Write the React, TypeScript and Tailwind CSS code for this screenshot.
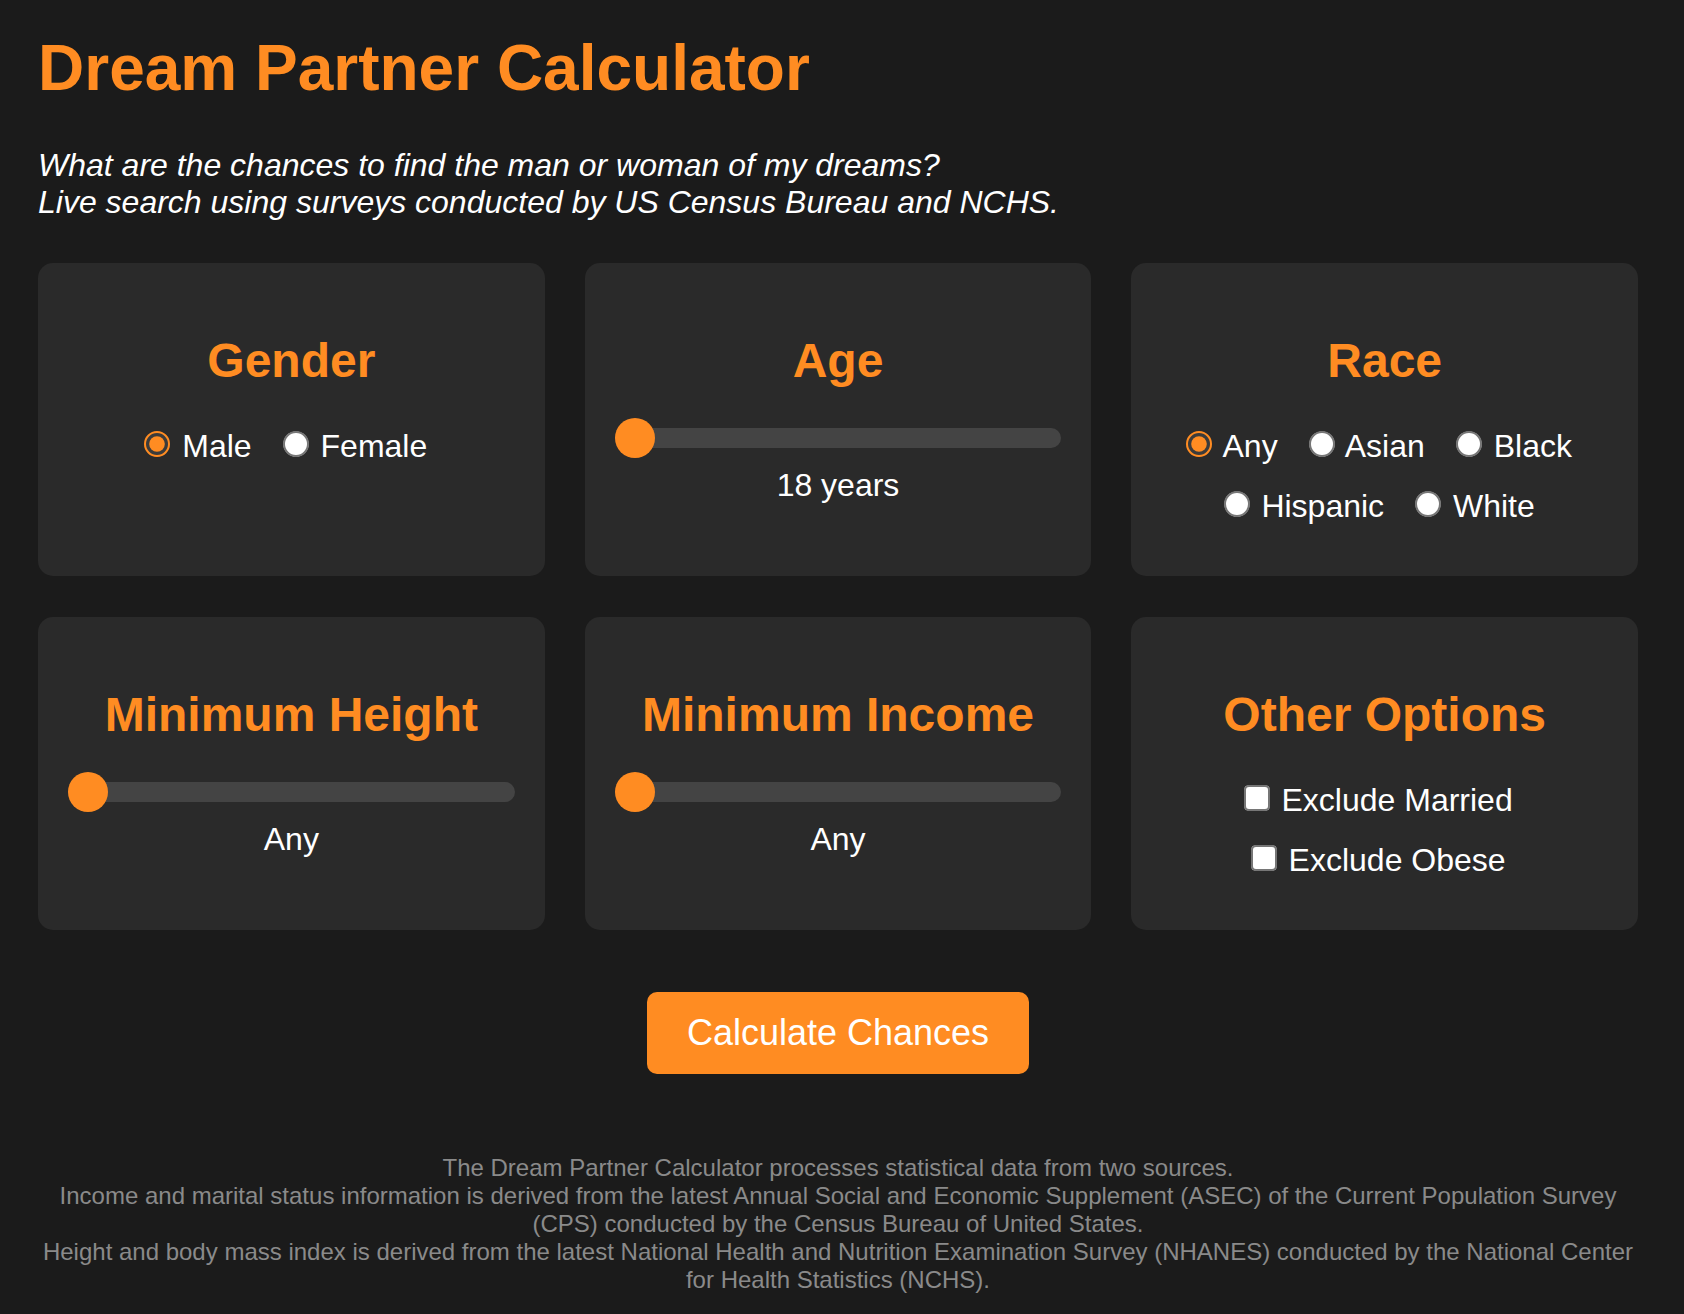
import { useState } from "react";

const ORANGE = "#ff8c22";

function Card({ title, children }: { title: string; children: React.ReactNode }) {
  return (
    <div className="rounded-[15px] bg-[#2a2a2a] px-[30px] pt-[70px] pb-[51px] text-center">
      <h2 className="mb-[40px] text-[48px] font-bold text-[#ff8c22]">{title}</h2>
      {children}
    </div>
  );
}

function RadioGroup({
  name,
  options,
  value,
  onChange,
}: {
  name: string;
  options: string[];
  value: string;
  onChange: (v: string) => void;
}) {
  return (
    <div className="flex flex-wrap justify-center gap-x-[26px] gap-y-[22.5px] pr-[16px] text-[32px] text-white">
      {options.map((opt) => (
        <label key={opt} className="block cursor-pointer">
          <input
            type="radio"
            name={name}
            checked={value === opt}
            onChange={() => onChange(opt)}
            className="ml-[2.5px] mr-[1.5px] accent-[#ff8c22] [zoom:2]"
          />{" "}
          {opt}
        </label>
      ))}
    </div>
  );
}

function Slider({ value, onChange, min, max }: { value: number; onChange: (v: number) => void; min: number; max: number }) {
  return (
    <input
      type="range"
      min={min}
      max={max}
      value={value}
      onChange={(e) => onChange(Number(e.target.value))}
      className="block h-5 w-full cursor-pointer appearance-none rounded-full bg-[#444] outline-none [&::-webkit-slider-thumb]:h-10 [&::-webkit-slider-thumb]:w-10 [&::-webkit-slider-thumb]:appearance-none [&::-webkit-slider-thumb]:rounded-full [&::-webkit-slider-thumb]:bg-[#ff8c22]"
    />
  );
}

function Check({ label, checked, onChange }: { label: string; checked: boolean; onChange: (v: boolean) => void }) {
  return (
    <label className="block cursor-pointer">
      <input
        type="checkbox"
        checked={checked}
        onChange={(e) => onChange(e.target.checked)}
        className="ml-[2px] mr-[1.5px] accent-[#ff8c22] [zoom:2]"
      />{" "}
      {label}
    </label>
  );
}

export default function App() {
  const [gender, setGender] = useState("Male");
  const [race, setRace] = useState("Any");
  const [age, setAge] = useState(18);
  const [height, setHeight] = useState(0);
  const [income, setIncome] = useState(0);
  const [married, setMarried] = useState(false);
  const [obese, setObese] = useState(false);

  return (
    <div className="min-h-screen bg-[#1b1b1b] pl-[38px] pr-[46px] pt-[31px] pb-[24px] font-['Liberation_Sans',Arial,sans-serif] leading-[normal]">
      <h1 className="text-[64px] font-bold" style={{ color: ORANGE }}>
        Dream Partner Calculator
      </h1>
      <p className="mt-[42px] text-[32px] italic text-white">
        What are the chances to find the man or woman of my dreams?
        <br />
        Live search using surveys conducted by US Census Bureau and NCHS.
      </p>

      <div className="mt-[42px] grid grid-cols-3 gap-x-[40px] gap-y-[41px]">
        <Card title="Gender">
          <RadioGroup name="gender" options={["Male", "Female"]} value={gender} onChange={setGender} />
        </Card>

        <Card title="Age">
          <Slider value={age} onChange={setAge} min={18} max={80} />
          <div className="mt-[19px] text-[32px] text-white">{age} years</div>
        </Card>

        <Card title="Race">
          <RadioGroup
            name="race"
            options={["Any", "Asian", "Black", "Hispanic", "White"]}
            value={race}
            onChange={setRace}
          />
        </Card>

        <Card title="Minimum Height">
          <Slider value={height} onChange={setHeight} min={0} max={30} />
          <div className="mt-[19px] text-[32px] text-white">{height === 0 ? "Any" : `${height}`}</div>
        </Card>

        <Card title="Minimum Income">
          <Slider value={income} onChange={setIncome} min={0} max={30} />
          <div className="mt-[19px] text-[32px] text-white">{income === 0 ? "Any" : `${income}`}</div>
        </Card>

        <Card title="Other Options">
          <div className="mt-[2px] flex flex-col items-center gap-y-[23.5px] pr-[17px] text-[32px] text-white">
            <Check label="Exclude Married" checked={married} onChange={setMarried} />
            <Check label="Exclude Obese" checked={obese} onChange={setObese} />
          </div>
        </Card>
      </div>

      <div className="mt-[62px] flex justify-center">
        <button className="rounded-[10px] bg-[#ff8c22] px-[40px] py-[20px] text-[36px] text-white hover:bg-[#f07d10]">
          Calculate Chances
        </button>
      </div>

      <div className="mt-[80px] text-center text-[24px] text-[#8a8a8a]">
        <div>The Dream Partner Calculator processes statistical data from two sources.</div>
        <div>
          Income and marital status information is derived from the latest Annual Social and Economic Supplement (ASEC) of
          the Current Population Survey (CPS) conducted by the Census Bureau of United States.
        </div>
        <div>
          Height and body mass index is derived from the latest National Health and Nutrition Examination Survey (NHANES)
          conducted by the National Center for Health Statistics (NCHS).
        </div>
      </div>
    </div>
  );
}
